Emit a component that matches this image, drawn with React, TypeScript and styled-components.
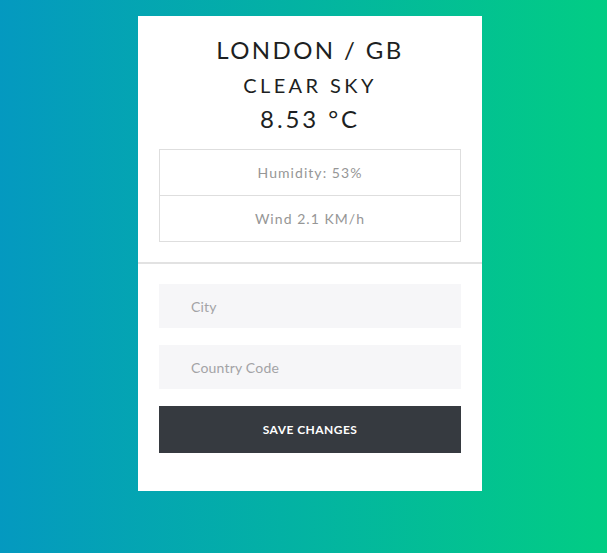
import React from "react";
import styled, { createGlobalStyle } from "styled-components";

const Global = createGlobalStyle`
  html, body { margin: 0; padding: 0; }
  body { font-family: "Lato", "Open Sans", sans-serif; }
  * { box-sizing: border-box; }
`;

const Page = styled.div`
  width: 607px;
  height: 553px;
  background: linear-gradient(to right, #0499c0, #02cd84);
  display: flex;
  justify-content: flex-start;
  padding: 16px 0 0 138px;
`;

const Card = styled.div`
  width: 344px;
  height: 475px;
  background: #fff;
  display: flex;
  flex-direction: column;
`;

const Top = styled.div`
  padding: 17px 21px 20px;
  display: flex;
  flex-direction: column;
  align-items: center;
`;

const Title = styled.div<{ size: number; spacing: number }>`
  font-size: ${(p) => p.size}px;
  letter-spacing: ${(p) => p.spacing}px;
  color: #1d1f22;
  line-height: 34.5px;
`;

const Stats = styled.div`
  width: 302px;
  margin-top: 12.5px;
  border: 1px solid #dedede;
`;

const Stat = styled.div<{ last?: boolean }>`
  height: ${(p) => (p.last ? 45 : 46)}px;
  display: flex;
  align-items: center;
  justify-content: center;
  font-size: 14px;
  letter-spacing: 1.05px;
  color: #969696;
  border-bottom: ${(p) => (p.last ? "none" : "1px solid #dedede")};
`;

const Divider = styled.div`
  height: 2px;
  background: #e2e2e2;
`;

const Form = styled.div`
  padding: 20px 21px 0;
  display: flex;
  flex-direction: column;
  gap: 17px;
`;

const Input = styled.input`
  height: 44px;
  width: 302px;
  border: none;
  outline: none;
  background: #f6f6f8;
  padding-left: 32px;
  font-family: "Lato", sans-serif;
  font-size: 14px;
  letter-spacing: 0.2px;
  color: #333;
  &::placeholder { color: #a3a3a6; }
`;

const Button = styled.button`
  height: 47px;
  width: 302px;
  border: none;
  background: #363a40;
  color: #fff;
  font-family: "Lato", sans-serif;
  font-weight: 700;
  font-size: 12px;
  letter-spacing: 0.45px;
  text-transform: uppercase;
`;

export default function App() {
  return (
    <>
      <Global />
      <Page>
        <Card>
          <Top>
            <Title size={24} spacing={2.4}>LONDON / GB</Title>
            <Title size={20} spacing={3.4}>CLEAR SKY</Title>
            <Title size={24} spacing={2.9}>8.53 °C</Title>
            <Stats>
              <Stat>Humidity: 53%</Stat>
              <Stat last>Wind 2.1 KM/h</Stat>
            </Stats>
          </Top>
          <Divider />
          <Form>
            <Input placeholder="City" />
            <Input placeholder="Country Code" />
            <Button>Save changes</Button>
          </Form>
        </Card>
      </Page>
    </>
  );
}
